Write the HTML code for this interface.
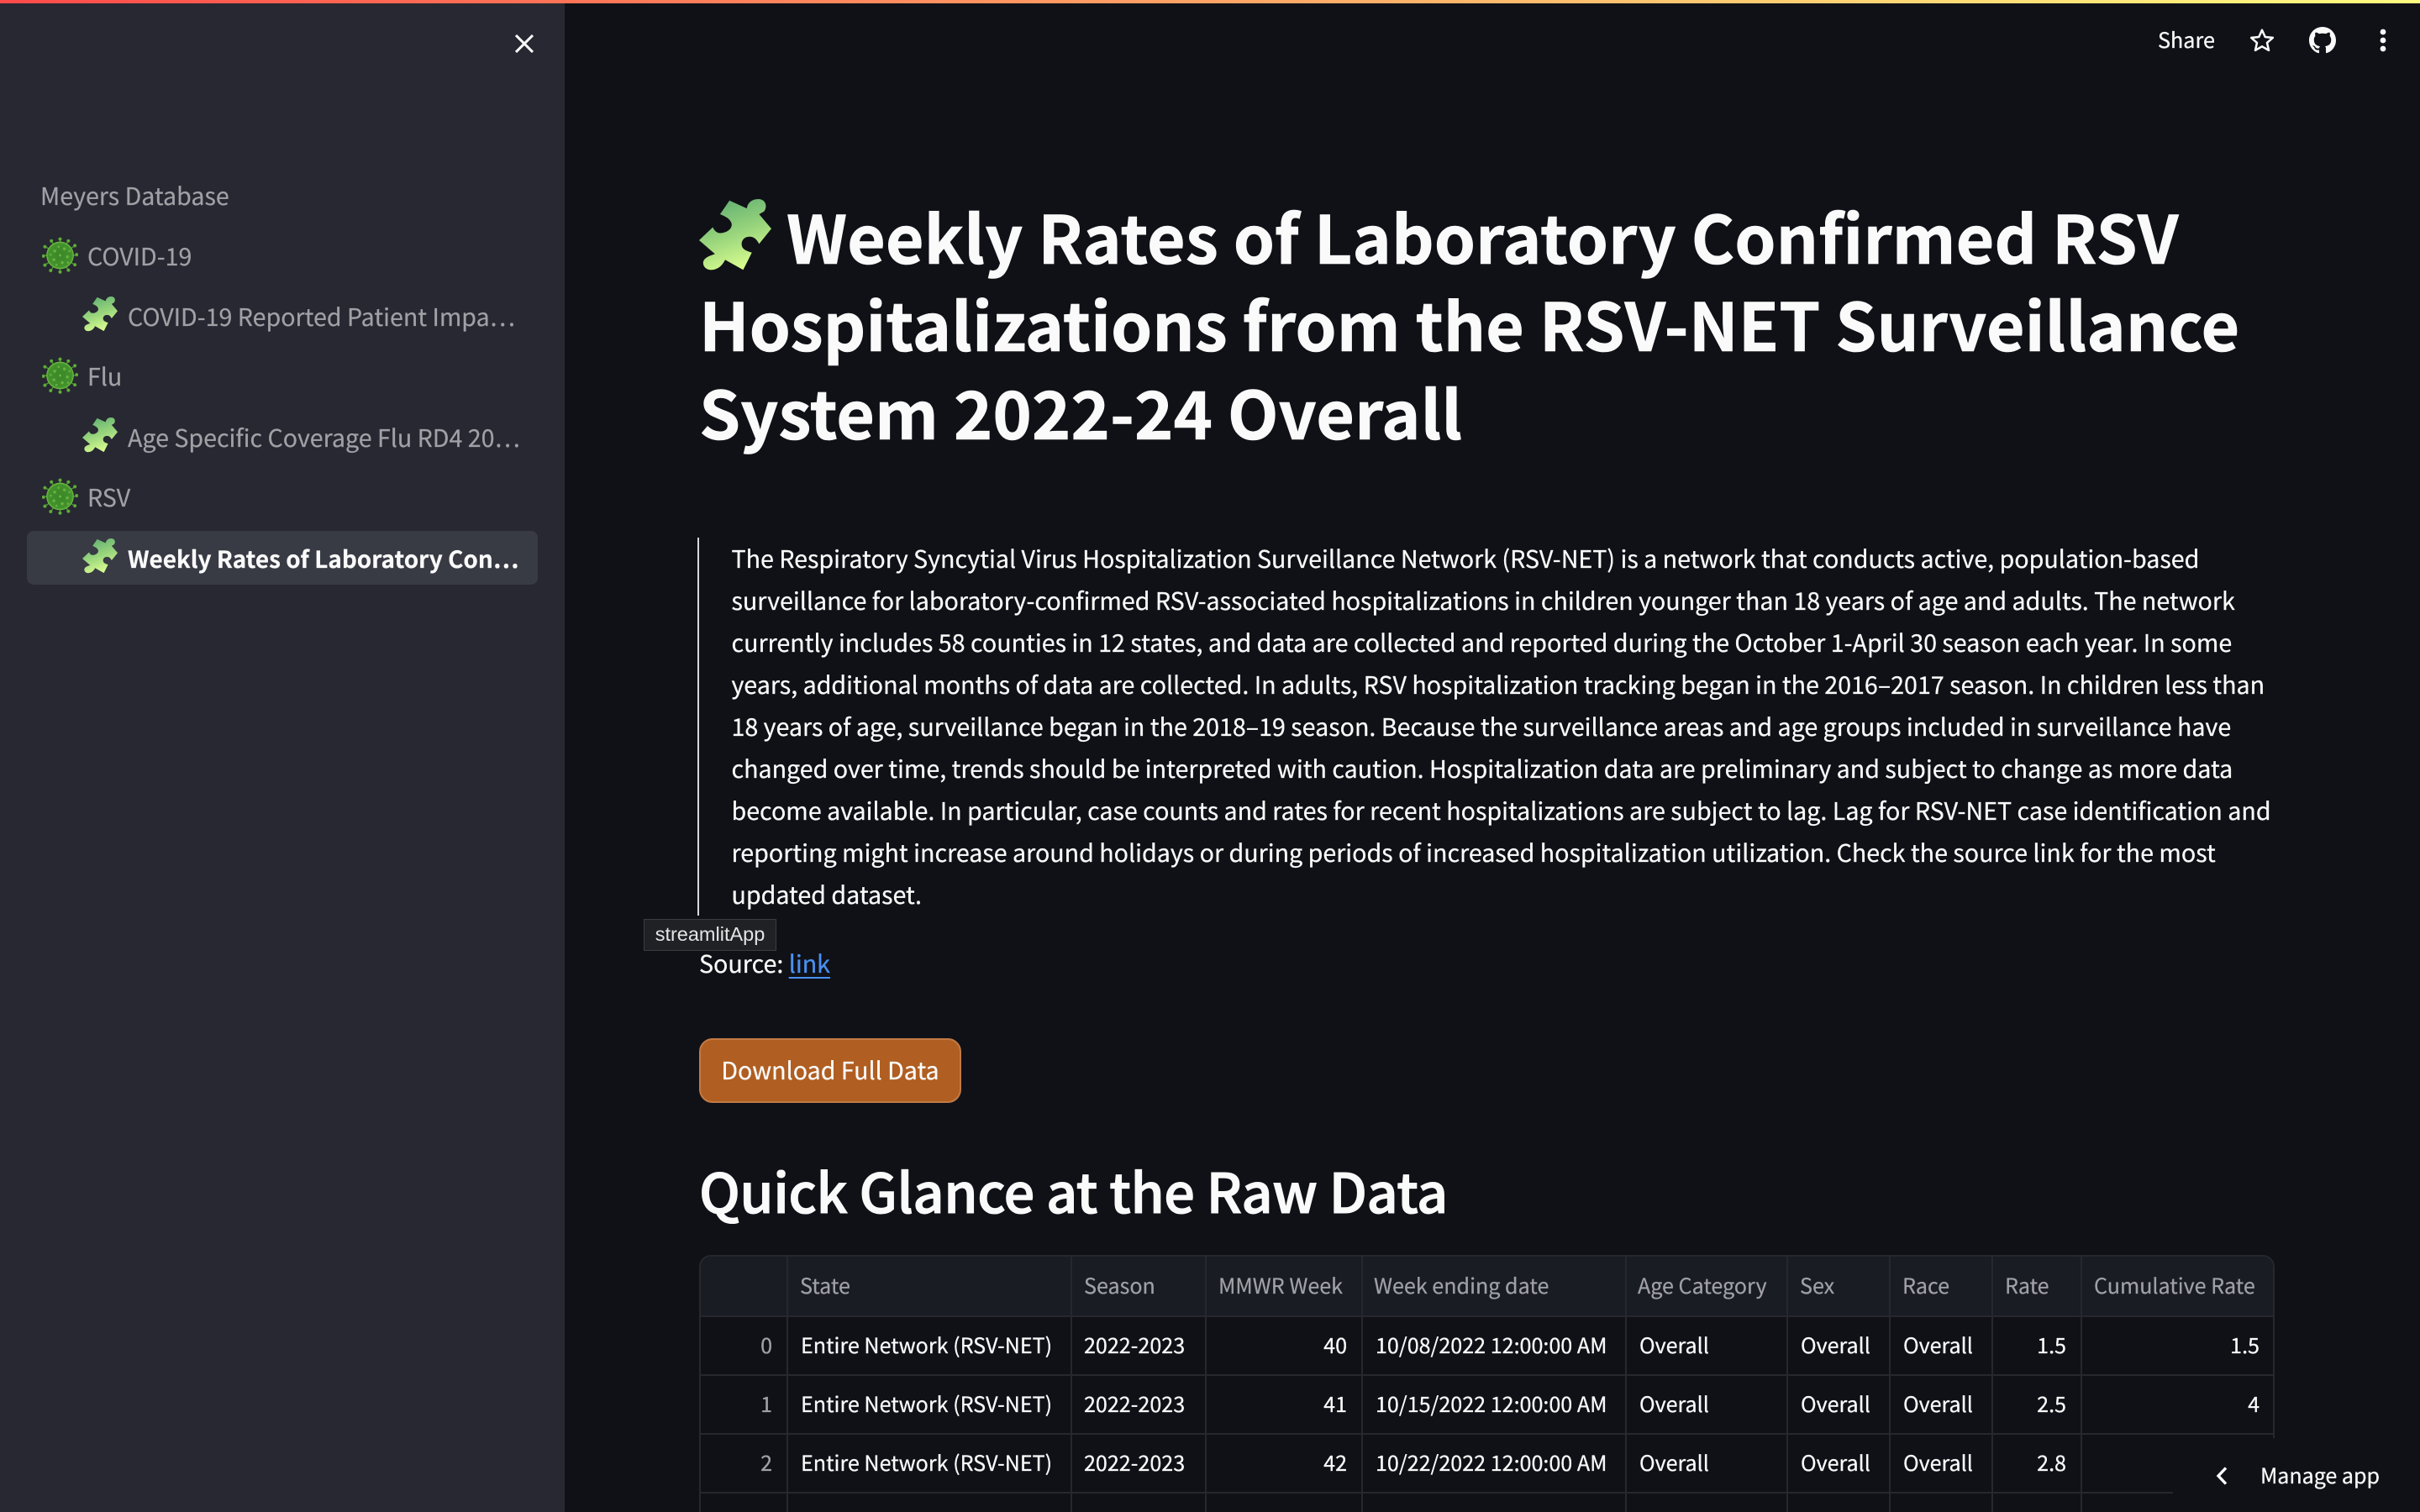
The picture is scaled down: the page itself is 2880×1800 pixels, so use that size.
<!DOCTYPE html>
<html lang="en"><head><meta charset="utf-8"><title>Weekly Rates</title>
<style>
html,body{margin:0;padding:0;width:2880px;height:1800px;overflow:hidden;background:#101117}
#r{position:relative;width:2880px;height:1800px;overflow:hidden;background:#101117;font-family:"Noto Sans CJK JP","Liberation Sans",sans-serif;color:#fafafa}
.t{position:absolute;white-space:nowrap}
.n{font-size:28.6px;line-height:40px;color:#a0a1a6;-webkit-text-stroke:.2px}
.b{font-size:28.64px;line-height:50px;left:870.5px;-webkit-text-stroke:.25px}
.h{font-size:78.8px;line-height:104.5px;font-weight:700;left:832px;-webkit-text-stroke:.6px}
.th{font-size:25.1px;line-height:40px;color:#a0a1a6;-webkit-text-stroke:.2px}
.td{font-size:25.1px;line-height:40px;color:#fafafa;-webkit-text-stroke:.25px}
.ln{position:absolute;background:#26282e}
svg{position:absolute;display:block}
</style></head><body><div id="r">
<svg width="0" height="0" style="left:0;top:0"><defs>
<linearGradient id="pg" x1="0.25" y1="0" x2="0.6" y2="1"><stop offset="0" stop-color="#5fae72"/><stop offset="0.5" stop-color="#98d47c"/><stop offset="1" stop-color="#dcff90"/></linearGradient>
<radialGradient id="vg" cx="0.5" cy="0.5" r="0.5"><stop offset="0" stop-color="#3c8628"/><stop offset="0.86" stop-color="#42922c"/><stop offset="1" stop-color="#78c648"/></radialGradient>
<symbol id="p" viewBox="0 0 100 100"><path d="M42 2 L66 13 C67 6 72 0 82 0 C92 0 95 10 90 17 L83 21 L100 41 L83 62 C80 56 76 52 70 52 C62 52 58 58 59 64 C60 70 66 72 73 74 L61 98 L36 84 C33 90 28 97 18 98 C8 99 3 90 7 84 C10 80 16 78 22 76 L0 57 L19 39 C21 44 25 48 31 47 C39 46 46 41 45 34 C43 27 36 24 29 21 Z" fill="url(#pg)"/></symbol>
<symbol id="v" viewBox="0 0 100 100"><g stroke="#569f36" stroke-width="2.8" fill="#6fbf40">
<line x1="50" y1="50" x2="50" y2="6"/><circle cx="50" cy="5" r="3.5"/><line x1="50" y1="50" x2="72" y2="10"/><circle cx="73" cy="10" r="3.5"/><line x1="50" y1="50" x2="90" y2="24"/><circle cx="91" cy="23" r="3.5"/><line x1="50" y1="50" x2="96" y2="50"/><circle cx="96" cy="48" r="3.5"/><line x1="50" y1="50" x2="90" y2="76"/><circle cx="91" cy="76" r="3.5"/><line x1="50" y1="50" x2="72" y2="90"/><circle cx="73" cy="91" r="3.5"/><line x1="50" y1="50" x2="50" y2="95"/><circle cx="50" cy="96" r="3.5"/><line x1="50" y1="50" x2="26" y2="90"/><circle cx="24" cy="92" r="3.5"/><line x1="50" y1="50" x2="9" y2="76"/><circle cx="8" cy="77" r="3.5"/><line x1="50" y1="50" x2="5" y2="50"/><circle cx="4" cy="52" r="3.5"/><line x1="50" y1="50" x2="9" y2="26"/><circle cx="8" cy="26" r="3.5"/><line x1="50" y1="50" x2="26" y2="10"/><circle cx="26" cy="10" r="3.5"/></g>
<circle cx="50" cy="50" r="38" fill="url(#vg)"/>
<g fill="#66b340"><circle cx="50" cy="50" r="3.5"/><circle cx="35" cy="38" r="4"/><circle cx="62" cy="32" r="4"/><circle cx="70" cy="54" r="4"/><circle cx="56" cy="70" r="4"/><circle cx="33" cy="62" r="4"/><circle cx="46" cy="26" r="3"/><circle cx="24" cy="48" r="3"/><circle cx="40" cy="76" r="3"/><circle cx="72" cy="70" r="3"/><circle cx="76" cy="38" r="3"/></g></symbol>
</defs></svg>

<div style="position:absolute;left:0;top:0;width:2880px;height:4px;z-index:5;background:linear-gradient(90deg,#ff4b4b,#fffd80)"></div>

<div style="position:absolute;left:0;top:0;width:672px;height:1800px;background:#272831"></div>
<svg style="left:613px;top:41px" width="22" height="22" viewBox="0 0 22 22"><path d="M1 1 L21 21 M21 1 L1 21" stroke="#fafafa" stroke-width="3" fill="none"/></svg>
<div style="position:absolute;left:32px;top:632px;width:608px;height:64px;border-radius:8px;background:#383a44"></div>
<div class="t n" style="left:48px;top:213px">Meyers Database</div>
<svg style="left:50px;top:282px" width="43" height="44"><use href="#v"/></svg>
<div class="t n" style="left:104px;top:285px">COVID-19</div>
<svg style="left:98px;top:353px" width="42" height="42"><use href="#p"/></svg>
<div class="t n" style="left:152px;top:357px">COVID-19 Reported Patient Impa…</div>
<svg style="left:50px;top:425px" width="43" height="44"><use href="#v"/></svg>
<div class="t n" style="left:104px;top:428px">Flu</div>
<svg style="left:98px;top:497px" width="42" height="42"><use href="#p"/></svg>
<div class="t n" style="left:152px;top:501px">Age Specific Coverage Flu RD4 20…</div>
<svg style="left:50px;top:569px" width="43" height="44"><use href="#v"/></svg>
<div class="t n" style="left:104px;top:572px">RSV</div>
<svg style="left:98px;top:641px" width="42" height="42"><use href="#p"/></svg>
<div class="t n" style="left:152px;top:645px;color:#fafafa;font-weight:700;font-size:27.9px">Weekly Rates of Laboratory Con…</div>

<div class="t" style="left:2568px;top:27px;font-size:25.2px;line-height:40px;-webkit-text-stroke:.25px">Share</div>
<svg style="left:2676px;top:32px" width="32" height="32" viewBox="0 0 24 24"><path d="M12 2.8 L14.8 9 L21.6 9.7 L16.5 14.2 L18 20.9 L12 17.5 L6 20.9 L7.5 14.2 L2.4 9.7 L9.2 9 Z" fill="none" stroke="#fafafa" stroke-width="1.9" stroke-linejoin="round"/></svg>
<svg style="left:2748px;top:32px" width="32" height="32" viewBox="0 0 16 16"><path fill="#fafafa" d="M8 0C3.58 0 0 3.58 0 8c0 3.54 2.29 6.53 5.47 7.59.4.07.55-.17.55-.38 0-.19-.01-.82-.01-1.49-2.01.37-2.53-.49-2.69-.94-.09-.23-.48-.94-.82-1.13-.28-.15-.68-.52-.01-.53.63-.01 1.08.58 1.23.82.72 1.21 1.87.87 2.33.66.07-.52.28-.87.51-1.07-1.78-.2-3.64-.89-3.64-3.95 0-.87.31-1.59.82-2.15-.08-.2-.36-1.02.08-2.12 0 0 .67-.21 2.2.82.64-.18 1.32-.27 2-.27.68 0 1.36.09 2 .27 1.53-1.04 2.2-.82 2.2-.82.44 1.1.16 1.92.08 2.12.51.56.82 1.27.82 2.15 0 3.07-1.87 3.75-3.65 3.95.29.25.54.73.54 1.48 0 1.07-.01 1.93-.01 2.2 0 .21.15.46.55.38A8.013 8.013 0 0016 8c0-4.42-3.58-8-8-8z"/></svg>
<svg style="left:2830px;top:32px" width="12" height="32" viewBox="0 0 12 32"><circle cx="6" cy="6" r="3.4" fill="#fafafa"/><circle cx="6" cy="16" r="3.4" fill="#fafafa"/><circle cx="6" cy="26" r="3.4" fill="#fafafa"/></svg>

<svg style="left:832px;top:237px" width="86" height="86"><use href="#p"/></svg>
<div class="t h" style="left:936px;top:228px">Weekly Rates of Laboratory Confirmed RSV</div>
<div class="t h" style="top:332px">Hospitalizations from the RSV-NET Surveillance</div>
<div class="t h" style="top:437px">System 2022-24 Overall</div>

<div style="position:absolute;left:830px;top:640px;width:2px;height:450px;background:#d9d9da"></div>
<div class="t b" style="top:640px">The Respiratory Syncytial Virus Hospitalization Surveillance Network (RSV-NET) is a network that conducts active, population-based</div>
<div class="t b" style="top:690px">surveillance for laboratory-confirmed RSV-associated hospitalizations in children younger than 18 years of age and adults. The network</div>
<div class="t b" style="top:740px">currently includes 58 counties in 12 states, and data are collected and reported during the October 1-April 30 season each year. In some</div>
<div class="t b" style="top:790px">years, additional months of data are collected. In adults, RSV hospitalization tracking began in the 2016–2017 season. In children less than</div>
<div class="t b" style="top:840px">18 years of age, surveillance began in the 2018–19 season. Because the surveillance areas and age groups included in surveillance have</div>
<div class="t b" style="top:890px">changed over time, trends should be interpreted with caution. Hospitalization data are preliminary and subject to change as more data</div>
<div class="t b" style="top:940px">become available. In particular, case counts and rates for recent hospitalizations are subject to lag. Lag for RSV-NET case identification and</div>
<div class="t b" style="top:990px">reporting might increase around holidays or during periods of increased hospitalization utilization. Check the source link for the most</div>
<div class="t b" style="top:1040px">updated dataset.</div>

<div class="t" style="left:766px;top:1094px;width:156px;height:36px;background:#1f2125;border:1px solid #3a3c40;z-index:3;font-family:'Liberation Sans',sans-serif;font-size:23.5px;line-height:34px;color:#e4e4e5;text-align:center">streamlitApp</div>
<div class="t" style="left:832px;top:1122px;font-size:28.64px;line-height:50px;-webkit-text-stroke:.25px">Source: <span style="color:#4a90f0;text-decoration:underline;text-underline-offset:5px">link</span></div>

<div style="position:absolute;left:832px;top:1236px;width:308px;height:73px;border:2px solid #c27a45;border-radius:16px;background:#b05e21"></div>
<div class="t" style="left:832px;top:1249px;width:312px;text-align:center;font-size:28.6px;line-height:50px;-webkit-text-stroke:.25px">Download Full Data</div>

<div class="t" style="left:832px;top:1366px;font-size:64.8px;line-height:100px;font-weight:500;letter-spacing:-.42px;-webkit-text-stroke:1.1px">Quick Glance at the Raw Data</div>

<div style="position:absolute;left:832px;top:1494px;width:1871px;height:340px;border:2px solid #26282e;border-radius:14px 14px 0 0;overflow:hidden">
<div style="position:absolute;left:0;top:0;width:1871px;height:70px;background:#1a1c24"></div>
</div>
<div class="ln" style="left:832px;top:1566px;width:1875px;height:2px"></div>
<div class="ln" style="left:832px;top:1636px;width:1875px;height:2px"></div>
<div class="ln" style="left:832px;top:1706px;width:1875px;height:2px"></div>
<div class="ln" style="left:832px;top:1776px;width:1875px;height:2px"></div>
<div class="ln" style="left:936px;top:1496px;width:2px;height:304px"></div>
<div class="ln" style="left:1274px;top:1496px;width:2px;height:304px"></div>
<div class="ln" style="left:1434px;top:1496px;width:2px;height:304px"></div>
<div class="ln" style="left:1620px;top:1496px;width:2px;height:304px"></div>
<div class="ln" style="left:1934px;top:1496px;width:2px;height:304px"></div>
<div class="ln" style="left:2126px;top:1496px;width:2px;height:304px"></div>
<div class="ln" style="left:2248px;top:1496px;width:2px;height:304px"></div>
<div class="ln" style="left:2370px;top:1496px;width:2px;height:304px"></div>
<div class="ln" style="left:2476px;top:1496px;width:2px;height:304px"></div>

<div class="t th" style="left:952px;top:1510px">State</div>
<div class="t th" style="left:1290px;top:1510px">Season</div>
<div class="t th" style="left:1450px;top:1510px">MMWR Week</div>
<div class="t th" style="left:1635px;top:1510px">Week ending date</div>
<div class="t th" style="left:1949px;top:1510px">Age Category</div>
<div class="t th" style="left:2142px;top:1510px">Sex</div>
<div class="t th" style="left:2264px;top:1510px">Race</div>
<div class="t th" style="left:2386px;top:1510px">Rate</div>
<div class="t th" style="left:2492px;top:1510px">Cumulative Rate</div>

<div class="t td" style="right:1961px;top:1581px;color:#a0a1a6">0</div>
<div class="t td" style="left:953px;top:1581px">Entire Network (RSV-NET)</div>
<div class="t td" style="left:1290px;top:1581px">2022-2023</div>
<div class="t td" style="right:1277px;top:1581px">40</div>
<div class="t td" style="left:1637px;top:1581px">10/08/2022 12:00:00 AM</div>
<div class="t td" style="left:1951px;top:1581px">Overall</div>
<div class="t td" style="left:2143px;top:1581px">Overall</div>
<div class="t td" style="left:2265px;top:1581px">Overall</div>
<div class="t td" style="right:421px;top:1581px">1.5</div>
<div class="t td" style="right:191px;top:1581px">1.5</div>

<div class="t td" style="right:1961px;top:1651px;color:#a0a1a6">1</div>
<div class="t td" style="left:953px;top:1651px">Entire Network (RSV-NET)</div>
<div class="t td" style="left:1290px;top:1651px">2022-2023</div>
<div class="t td" style="right:1277px;top:1651px">41</div>
<div class="t td" style="left:1637px;top:1651px">10/15/2022 12:00:00 AM</div>
<div class="t td" style="left:1951px;top:1651px">Overall</div>
<div class="t td" style="left:2143px;top:1651px">Overall</div>
<div class="t td" style="left:2265px;top:1651px">Overall</div>
<div class="t td" style="right:421px;top:1651px">2.5</div>
<div class="t td" style="right:191px;top:1651px">4</div>

<div class="t td" style="right:1961px;top:1721px;color:#a0a1a6">2</div>
<div class="t td" style="left:953px;top:1721px">Entire Network (RSV-NET)</div>
<div class="t td" style="left:1290px;top:1721px">2022-2023</div>
<div class="t td" style="right:1277px;top:1721px">42</div>
<div class="t td" style="left:1637px;top:1721px">10/22/2022 12:00:00 AM</div>
<div class="t td" style="left:1951px;top:1721px">Overall</div>
<div class="t td" style="left:2143px;top:1721px">Overall</div>
<div class="t td" style="left:2265px;top:1721px">Overall</div>
<div class="t td" style="right:421px;top:1721px">2.8</div>

<div class="t td" style="right:1961px;top:1791px;color:#a0a1a6">3</div>
<div class="t td" style="left:953px;top:1791px">Entire Network (RSV-NET)</div>
<div class="t td" style="left:1290px;top:1791px">2022-2023</div>
<div class="t td" style="right:1277px;top:1791px">43</div>
<div class="t td" style="left:1637px;top:1791px">10/29/2022 12:00:00 AM</div>
<div class="t td" style="left:1951px;top:1791px">Overall</div>
<div class="t td" style="left:2143px;top:1791px">Overall</div>
<div class="t td" style="left:2265px;top:1791px">Overall</div>
<div class="t td" style="right:421px;top:1791px">2.9</div>

<div style="position:absolute;left:2586px;top:1712px;width:294px;height:88px;background:#101117;border-radius:8px 0 0 0;z-index:4"></div>
<svg style="left:2636px;top:1746px;z-index:5" width="16" height="22" viewBox="0 0 16 22"><path d="M13 1.5 L4 11 L13 20.5" fill="none" stroke="#fafafa" stroke-width="3.4"/></svg>
<div class="t" style="left:2690px;top:1736px;font-size:25px;line-height:40px;z-index:5;-webkit-text-stroke:.25px">Manage app</div>
</div></body></html>
